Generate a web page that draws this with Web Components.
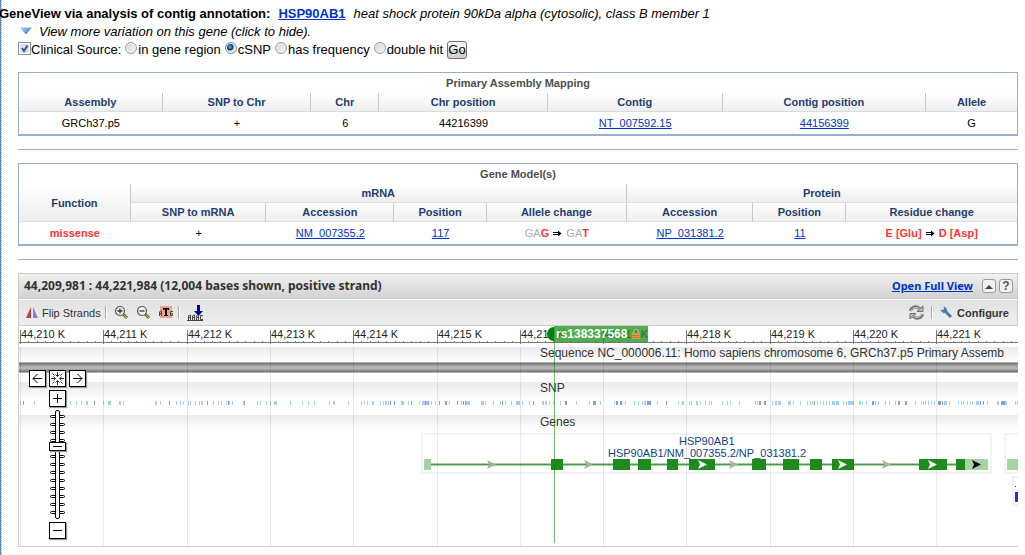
<!DOCTYPE html>
<html lang="en">
<head>
<meta charset="utf-8">
<title>GeneView: HSP90AB1</title>
<style>
body { margin: 0; background: #fff; color: #000; font: 13px/18px "Liberation Sans", Arial, sans-serif; overflow-x: hidden; }
</style>
</head>
<body>
<page-shell>
  <gene-heading></gene-heading>
  <source-filter></source-filter>
  <assembly-table></assembly-table>
  <gene-model-table></gene-model-table>
  <sequence-viewer>
    <ruler-track></ruler-track>
    <sequence-track>Sequence NC_000006.11: Homo sapiens chromosome 6, GRCh37.p5 Primary Assemb</sequence-track>
    <snp-track>SNP</snp-track>
    <genes-track>Genes</genes-track>
    <snp-marker slot="overlay">rs138337568</snp-marker>
    <pan-zoom slot="overlay"></pan-zoom>
  </sequence-viewer>
</page-shell>
<script>
function define(name, html, setup) {
  customElements.define(name, class extends HTMLElement {
    connectedCallback() {
      if (this.shadowRoot) return;
      const root = this.attachShadow({ mode: 'open' });
      root.innerHTML = html;
      if (setup) setup(root);
    }
  });
}

define('page-shell', `
<style>
:host { display: block; border-left: 1px solid #5f86bb; }
main { border-left: 1px dotted #b4b4b4; padding: 5px 7px 8px 16px; }
</style>
<main><slot></slot></main>`);

define('gene-heading', `
<style>
:host { display: block; }
h1 { display: flex; gap: 8px; margin: 0 0 0 -19px; font-size: 13px; line-height: 18px; font-weight: bold; white-space: nowrap; }
h1 em { font-weight: normal; }
a { color: #0033cc; }
p { margin: 0; display: flex; align-items: center; gap: 7px; font-style: italic; padding-left: 2px; }
svg { display: block; margin-top: -3px; }
</style>
<h1><span>GeneView via analysis of contig annotation:</span><a href="#gene">HSP90AB1</a><em>heat shock protein 90kDa alpha (cytosolic), class B member 1</em></h1>
<p><svg width="12" height="8"><defs><linearGradient id="g" x2="1" y2="1"><stop stop-color="#a9cdf5"/><stop offset="1" stop-color="#3c6fc0"/></linearGradient></defs><path d="M0 0.500H12L6 7.500Z" fill="url(#g)"/></svg><span>View more variation on this gene (click to hide).</span></p>`);

define('source-filter', `
<style>
:host { display: block; margin-bottom: 14px; }
form { display: flex; align-items: center; gap: 4px; height: 17px; }
label { display: flex; align-items: center; }
input { appearance: none; box-sizing: border-box; margin: 0; flex: none; }
input[type=checkbox] { width: 13px; height: 13px; margin-top: -3px; border: 1px solid #8c8f94; box-shadow: inset 0 0 0 1px #fff; background: url("data:image/svg+xml,%3Csvg xmlns='http://www.w3.org/2000/svg' width='11' height='11'%3E%3Cpath d='M3 5L5 8L8.500 2.500' fill='none' stroke='%233c4f94' stroke-width='2'/%3E%3C/svg%3E") center no-repeat #dde2ea; }
input[type=radio] { width: 12px; height: 12px; margin: -3px 1px 0 0; border: 1px solid #999; border-radius: 50%; background: linear-gradient(135deg, #d0d0d0, #fbfbfb); box-shadow: inset 0 0 0 1px #f4f4f4; }
input[type=radio]:checked { border-color: #7790a4; background: radial-gradient(circle at 40% 40%, #6cc6ee 0, #1b5f8c 2px, #0d2f4d 3px, #dce6ee 4px); }
button { font: inherit; line-height: 16px; width: 20px; height: 18px; padding: 0; border: 1px solid #707070; border-radius: 3px; background: linear-gradient(#f2f2f2 50%, #d2d2d2 50%); color: #000; }
</style>
<form>
<label><input type="checkbox" checked>Clinical Source:</label>
<label><input type="radio" name="src">in gene region</label>
<label><input type="radio" name="src" checked>cSNP</label>
<label><input type="radio" name="src">has frequency</label>
<label><input type="radio" name="src">double hit</label>
<button type="button">Go</button>
</form>`);

const tableCss = `
:host { display: block; border-bottom: 1px solid #98b0ca; padding-bottom: 13px; margin-bottom: 13px; }
table { width: 100%; box-sizing: border-box; table-layout: fixed; border-collapse: separate; border-spacing: 0; border: 1px solid #98b0ca; border-bottom-width: 2px; font-size: 11px; line-height: 18px; text-align: center; }
th, td { padding: 0; }
.title th { height: 20px; color: #4d4d4d; }
.head th { height: 18px; color: #1f3d70; background: linear-gradient(#fff, #eee); border-bottom: 1px solid #d5dde9; border-right: 1px solid #c9c9c9; }
.head th.last { border-right: 0; }
td { height: 22px; }
a { color: #0033cc; }
b { color: #f33; }
.dim { color: #aaa; }
svg { vertical-align: 0; margin: 0 1px; }`;
const arrow = '<svg width="9" height="7"><path d="M0 2.500H6M0 4.500H6" stroke="#000"/><path d="M5 0.500L8.500 3.500L5 6.500Z"/></svg>';

define('assembly-table', `
<style>${tableCss}</style>
<table>
<colgroup><col style="width:14.4%"><col style="width:14.9%"><col style="width:6.8%"><col style="width:16.9%"><col style="width:17.5%"><col style="width:20.4%"><col></colgroup>
<thead><tr class="title"><th colspan="7">Primary Assembly Mapping</th></tr>
<tr class="head"><th>Assembly</th><th>SNP to Chr</th><th>Chr</th><th>Chr position</th><th>Contig</th><th>Contig position</th><th class="last">Allele</th></tr></thead>
<tbody><tr><td>GRCh37.p5</td><td>+</td><td>6</td><td>44216399</td><td><a href="#contig">NT_007592.15</a></td><td><a href="#pos">44156399</a></td><td>G</td></tr></tbody>
</table>`);

define('gene-model-table', `
<style>${tableCss}</style>
<table>
<colgroup><col style="width:11.2%"><col style="width:13.6%"><col style="width:12.8%"><col style="width:9.3%"><col style="width:14%"><col style="width:12.7%"><col style="width:9.3%"><col></colgroup>
<thead><tr class="title"><th colspan="8">Gene Model(s)</th></tr>
<tr class="head"><th rowspan="2">Function</th><th colspan="4">mRNA</th><th colspan="3" class="last">Protein</th></tr>
<tr class="head"><th>SNP to mRNA</th><th>Accession</th><th>Position</th><th>Allele change</th><th>Accession</th><th>Position</th><th class="last">Residue change</th></tr></thead>
<tbody><tr><td><b>missense</b></td><td>+</td><td><a href="#nm">NM_007355.2</a></td><td><a href="#p117">117</a></td><td><span class="dim">GA</span><b>G</b> ${arrow} <span class="dim">GA</span><b>T</b></td><td><a href="#np">NP_031381.2</a></td><td><a href="#p11">11</a></td><td><b>E [Glu]</b> ${arrow} <b>D [Asp]</b></td></tr></tbody>
</table>`);

const lens = sign => `<svg width="15" height="15"><path d="M9 9L13 13" stroke="#6e6a2e" stroke-width="3"/><path d="M9.500 9.500L13 13" stroke="#c9bd5c"/><circle cx="6" cy="6" r="4.500" fill="#eef1f4" stroke="#555" stroke-width="1.200"/><path d="${sign}" stroke="#333" stroke-width="1.300"/></svg>`;

define('sequence-viewer', `
<style>
:host { display: block; border-left: 1px solid #ccc; border-bottom: 1px solid #ccc; border-top: 1px solid #ccc; color: #333; }
header, nav { display: flex; align-items: center; border-right: 1px solid #ccc; }
header { height: 24px; background: linear-gradient(#f1f1f1, #d2d2d2); border-bottom: 1px solid #ccc; padding: 0 4px 0 5px; gap: 3px; }
h2 { flex: 1; margin: 0; font: bold 12px/24px "Noto Sans", sans-serif; }
header a { font: bold 11px/24px "Noto Sans", sans-serif; color: #0033cc; margin-right: 6px; }
header button { width: 14px; height: 14px; padding: 0; border: 1px solid #999; border-radius: 3px; background: #f2f2f2; color: #555; font: bold 12px/12px "Liberation Sans", sans-serif; display: grid; place-items: center; }
nav { height: 25px; background: linear-gradient(#e1e1e1, #efefef); border-top: 1px solid #fff; border-bottom: 1px solid #ccc; padding: 0 8px 0 7px; font-size: 11px; }
nav button { display: flex; align-items: center; gap: 4px; border: 0; padding: 0; background: none; font: 11px/18px "Liberation Sans", sans-serif; color: #333; }
nav button.strong { font-weight: bold; }
nav i { width: 1px; height: 13px; background: #aaa; border-right: 1px solid #fff; margin: 0 7px 0 4px; }
nav .gap { margin-right: 7px; }
nav .push { margin-left: auto; }
nav .push + i { margin-left: 7px; }
svg { display: block; }
.canvas { position: relative; height: 220px; overflow: hidden; background: #fff; }
.grid { position: absolute; inset: 21px 0 0 0; pointer-events: none; }
.grid svg { width: 100%; height: 100%; }
</style>
<header><h2>44,209,981 : 44,221,984 (12,004 bases shown, positive strand)</h2><a href="#full">Open Full View</a>
<button type="button" aria-label="Collapse"><svg width="8" height="5"><path d="M0 5L4 1L8 5Z" fill="#444"/></svg></button><button type="button" aria-label="Help">?</button></header>
<nav>
<button type="button"><svg width="12" height="11"><path d="M5 0V11H0Z" fill="#bb4040"/><path d="M7 0V11H12Z" fill="#8484cc"/></svg>Flip Strands</button><i></i>
<button type="button" class="gap" aria-label="Zoom in">${lens('M3.500 6H8.500M6 3.500V8.500')}</button>
<button type="button" class="gap" aria-label="Zoom out">${lens('M3.500 6H8.500')}</button>
<button type="button" aria-label="Zoom to sequence"><svg width="16" height="13"><rect x="2" width="12" height="12" fill="#eba58c"/><path d="M5 2H11V4H10V3.500H9V9H10V10H6V9H7V3.500H6V4H5Z" fill="#000"/><path d="M1.500 10V6L2.500 5H3.500V10M1 7.500H4M15 5.500H12.500V9.500H14.500V7.500H13.500" fill="none" stroke="#553f38"/></svg></button><i></i>
<button type="button" aria-label="Go to sequence"><svg width="17" height="16"><path d="M10 0H13V6H16L11.500 11L7 6H10Z" fill="#00009c"/><path d="M1.500 15V11L2.500 10H3.500V15M1 12.500H4M5.500 15V11L6.500 10H7.500V15M5 12.500H8M9.500 15V11L10.500 10H11.500V15M9 12.500H12M16 10.500H13.500V14.500H16M0 15.500H16" fill="none" stroke="#444"/></svg></button>
<button type="button" class="push" aria-label="Reload"><svg width="15" height="15" fill="none"><path d="M1.500 6C2.500 1.500 8 .5 11 4M13.500 9C12.500 13.500 7 14.500 4 11" stroke="#707070" stroke-width="3"/><path d="M2 6C3 2.500 8 1.500 11 4M13 9C12 12.500 7 13.500 4 11" stroke="#ddd"/><path d="M14 1V6.500H8Z M1 14V8.500H7Z" fill="#bbb" stroke="#707070"/></svg></button><i></i>
<button type="button" class="strong"><svg width="13" height="13" fill="none"><path d="M5 5L11 11" stroke="#4c7dab" stroke-width="3"/><path d="M4.500 1.500V4.500H1.500M1 4L4 6.500L6.500 4L4 1" stroke="#4c7dab" stroke-width="1.500"/></svg>Configure</button>
</nav>
<div class="canvas"><slot></slot><div class="grid"><svg id="grid"></svg></div><slot name="overlay"></slot></div>`, root => {
  let s = '';
  for (let i = 0; i < 40; i++) s += `<rect x="${1 + Math.round(i * 83.3)}" width="1" height="100%" fill="#000" fill-opacity=".09"/>`;
  root.getElementById('grid').innerHTML = s;
});

define('ruler-track', `
<style>
:host { display: block; height: 21px; }
svg { display: block; width: 100%; height: 21px; font: 11px "Liberation Sans", sans-serif; fill: #222; }
</style><svg></svg>`, root => {
  const svg = root.querySelector('svg');
  const draw = () => {
    const width = root.host.clientWidth;
    let s = '<rect y="16" width="100%" height="1" fill="#777"/>';
    for (let i = 0, x = 1; x < width; i++, x = 1 + Math.round(i * 83.3)) {
      s += `<rect x="${x}" y="4" width="1" height="14" fill="#777"/>`;
      if (x + 48 < width) s += `<text x="${x + 1}" y="12">44,${210 + i} K</text>`;
      for (let k = 1; k < 10; k++) s += `<rect x="${x + Math.round(k * 8.33)}" y="15" width="1" height="1" fill="#777"/>`;
    }
    svg.innerHTML = s;
  };
  draw();
  addEventListener('resize', draw);
});

const trackCss = `
:host { display: block; position: relative; color: #333; }
.name { display: block; padding-left: 521px; font-size: 12px; line-height: 14px; white-space: nowrap; overflow: hidden; background: linear-gradient(#ebebeb, #fff); }
svg { display: block; width: 100%; }`;

define('sequence-track', `
<style>${trackCss}
:host { height: 35px; }
.name { height: 15px; line-height: 12px; }
.bar { height: 11px; background: linear-gradient(#b0b0b0 0 1px, #7c7c7c 1px 2px, #9a9a9a 3px, #bdbdbd 6px, #9a9a9a 8px, #7c7c7c 9px 10px, #b0b0b0 10px); }
</style><div class="name"><slot></slot></div><div class="bar"></div>`);

define('snp-track', `
<style>${trackCss}
:host { height: 33px; }
.name { line-height: 12px; height: 19px; }
svg { height: 4px; }
</style><div class="name"><slot></slot></div><svg></svg>`, root => {
  // "position[:width]", a trailing d marks a denser bin
  const bins = `20 23d 34 49 66 70 76 81 86:2 94d 103 108:3 119:2 123 155:2 160 169d 176 180 183 188 190 195 199 201:2 207d 213 218 221 226 228d 229 232 243 244d 257 260 266 270 274:3 290
302 308 314 329 333:2 348 361 364 367 372:2 380 383 385:2 388 390d 394d 401:3 408 411d 419 422:3 425d 426:2 428d 431 435 439d 445:2d 449 457d 461 463d 465d 466:4 481:3 485 493 500 502d 505 511 516:4 522 529 533d
542:2 545:2 549 553 560 565:2d 576 589 593:3d 600 614 616:2d 620:2d 625 634 638 642 644:2 647:4d 657 666d 678 682:2 689 691 696:2 700
705 709 711 722 727 730 739 755 757 759:2d 764:2d 772 775:2 778:2 780 788:3 793 800 807 810 812 814d 817 820 823 826 829 832:3 836:3 843 846 848:2 850:4 859:2 862 866 872:2d 875 878 885 889 895 898:2d 905:2d 915 921 923 925 928 931 934 938:3d 942d 944:2 946 949 958 961 963 967 970 972 976:3 980d 983d 987 997:2 1001:4d 1005:2 1015 1017`.split(/\s+/);
  root.querySelector('svg').innerHTML = bins.map(b => {
    const [, x, w, d] = b.match(/^(\d+)(?::(\d+))?(d?)$/);
    return `<rect x="${x - 19}" width="${w || 1}" height="4" fill="${d ? '#7f9fd8' : '#a5cff0'}"/>`;
  }).join('');
});

define('genes-track', `
<style>${trackCss}
.name { height: 14px; }
svg { height: 117px; }
text { font-size: 11px; fill: #0f4287; }
</style><div class="name"><slot></slot></div><svg></svg>`, root => {
  // Coordinates are relative to the map's left edge and to y = 0 under the track's name.
  const box = (x, y, w, h) => `<rect x="${x}" y="${y}" width="${w}" height="${h}" fill="none" stroke="#eef6ee" stroke-width="2"/>`;
  const exon = (x, w, c = '#1f8b1f') => `<rect x="${x - 19}" y="30" width="${w}" height="11" fill="${c}"/>`;
  const head = (x, c) => `<path d="M${x - 19} 31L${x - 10} 35.500L${x - 19} 40L${x - 17} 35.500Z" fill="${c}"/>`;
  root.querySelector('svg').innerHTML =
    box(403, 5, 569, 39) + box(986, 5, 300, 39) + box(994, 48, 300, 28) +
    '<rect x="412" y="34" width="540" height="3" fill="#a6d2a6"/><rect x="412" y="35" width="540" height="1" fill="#4a9f4a"/>' +
    exon(424, 7, '#a6d2a6') +
    [[551, 12], [613, 17], [638, 13], [667, 11], [689, 26], [752, 14], [783, 16], [810, 12], [832, 22], [919, 28], [956, 9]].map(e => exon(...e)).join('') +
    exon(965, 23, '#a6d2a6') + exon(1007, 60, '#a6d2a6') +
    [487, 584, 729, 882].map(x => head(x, '#aaa')).join('') +
    [698, 838, 928].map(x => head(x, '#fff')).join('') + head(972, '#000') +
    '<rect x="996" y="63" width="60" height="10" fill="#2b2be8"/><rect x="996" y="57" width="1" height="1" fill="#0f4287"/>' +
    '<text x="660" y="16">HSP90AB1</text><text x="589" y="28">HSP90AB1/NM_007355.2/NP_031381.2</text>';
});

define('snp-marker', `
<style>
:host { position: absolute; left: 528px; top: 0; height: 217px; font: bold 12px/16px "Liberation Sans", sans-serif; color: #fff; }
.tag { display: flex; align-items: center; height: 16px; }
.cap { width: 7px; height: 14px; border-radius: 7px 0 0 7px; background: #008000; }
.label { display: flex; align-items: center; gap: 4px; height: 16px; padding: 0 7px 0 1px; background: rgba(24, 145, 24, .75); border-left: 1px solid #3a9e3a; box-sizing: border-box; }
.line { width: 1px; height: 201px; margin-left: 7px; background: rgba(0, 128, 0, .55); }
</style>
<div class="tag"><div class="cap"></div><div class="label"><slot></slot><svg width="10" height="12"><path d="M2.500 6V4C2.500 0.500 7.500 0.500 7.500 4V6" fill="none" stroke="#a9b0a9" stroke-width="1.500"/><rect x="1" y="5" width="8" height="6" fill="#e39a45"/><path d="M1 7.500H9M1 9.500H9" stroke="#c67c2c"/></svg></div></div>
<div class="line"></div>`);

define('pan-zoom', `
<style>
:host { position: absolute; left: 10px; top: 44px; }
.pad { display: grid; grid-template-columns: repeat(3, 17px); gap: 3px; justify-items: center; }
button { width: 17px; height: 17px; padding: 0; box-sizing: border-box; border: 1px solid #000; background: #fff; box-shadow: 1px 1px 1px #999; display: grid; place-items: center; }
svg { display: block; fill: none; stroke: #000; }
.mid { grid-column: 2; }
.scale { position: relative; width: 17px; height: 109px; }
input { appearance: none; position: absolute; inset: 0; width: 17px; height: 109px; margin: 0; background: none; writing-mode: vertical-lr; }
input::-webkit-slider-thumb { appearance: none; box-sizing: border-box; width: 17px; height: 9px; border: 1px solid #000; background: linear-gradient(#000, #000) center / 9px 1px no-repeat #fff; box-shadow: 1px 1px 1px #999; }
</style>
<div class="pad">
<button type="button" aria-label="Pan left"><svg width="11" height="11"><path d="M1 5.500H10M5.500 1L1 5.500L5.500 10"/></svg></button>
<button type="button" aria-label="Centre"><svg width="13" height="13"><path d="M6.500 0V4M4.500 2.500L6.500 4.500L8.500 2.500M6.500 13V9M4.500 10.500L6.500 8.500L8.500 10.500M0 6.500H4M2.500 4.500L4.500 6.500L2.500 8.500M13 6.500H9M10.500 4.500L8.500 6.500L10.500 8.500M1.500 1.500L3.500 3.500M11.500 1.500L9.500 3.500M1.500 11.500L3.500 9.500M11.500 11.500L9.500 9.500" stroke-width=".8"/></svg></button>
<button type="button" aria-label="Pan right"><svg width="11" height="11"><path d="M1 5.500H10M5.500 1L10 5.500L5.500 10"/></svg></button>
<button type="button" class="mid" aria-label="Zoom in"><svg width="9" height="9"><path d="M0 4.500H9M4.500 0V9"/></svg></button>
<div class="mid scale"><svg width="17" height="109" id="scale"></svg><input type="range" min="0" max="100" value="32" aria-label="Zoom level"></div>
<button type="button" class="mid" aria-label="Zoom out"><svg width="9" height="9"><path d="M0 4.500H9"/></svg></button>
</div>`, root => {
  let s = '';
  for (let y = 6; y < 104; y += 8) s += `<rect x="1.500" y="${y - .5}" width="14" height="2" rx="1" fill="#fff"/>`;
  root.getElementById('scale').innerHTML = s + '<rect x="6.500" y="0.500" width="4" height="108" rx="1.500" fill="#fff"/>';
});
</script>
</body>
</html>
